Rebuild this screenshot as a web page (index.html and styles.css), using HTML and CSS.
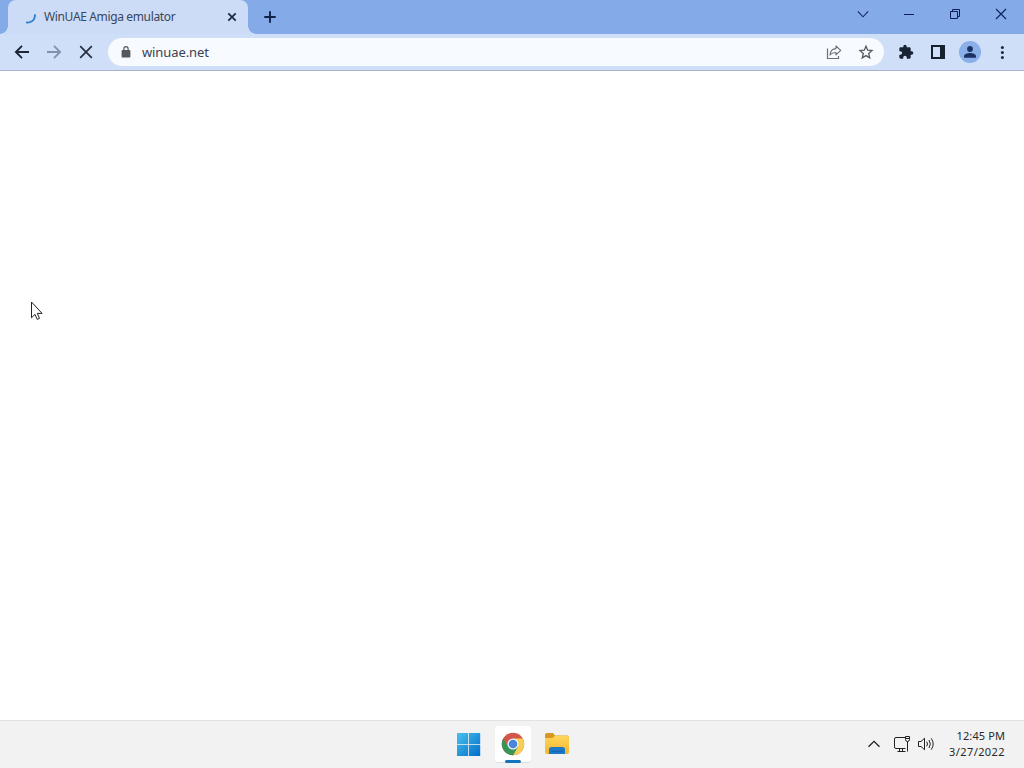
FILE: index.html
```html
<!DOCTYPE html>
<html lang="en">
<head>
    <meta charset="UTF-8">
    <title>WinUAE Amiga emulator</title>
    <link rel="stylesheet" href="styles.css">
</head>
<body>
    <div class="tab-strip">
        <div class="tab">
            <svg class="spinner" width="16" height="16" viewBox="0 0 16 16"><path d="M13 5.300C13.200 10.600 9.800 14.300 4 13.400" fill="none" stroke="#2c7ed3" stroke-width="1.8"/></svg>
            <span class="tab-title">WinUAE Amiga emulator</span>
            <svg class="tab-close" width="16" height="16" viewBox="0 0 16 16"><path d="M4.300 4.300l7.400 7.400M11.700 4.300l-7.400 7.400" stroke="#1c2740" stroke-width="1.7"/></svg>
        </div>
        <div class="new-tab">
            <svg width="16" height="16" viewBox="0 0 16 16"><path d="M8 2.300v11.400M2.300 8h11.400" stroke="#10234a" stroke-width="1.9"/></svg>
        </div>
        <div class="window-buttons">
            <div class="window-button"><svg width="12" height="12" viewBox="0 0 12 12"><path d="M.8 3.300L6 8.800l5.200-5.500" fill="none" stroke="#16266b" stroke-width="1.1"/></svg></div>
            <div class="window-button"><svg width="12" height="12" viewBox="0 0 12 12"><path d="M1 6.500h10" stroke="#0d1d5c"/></svg></div>
            <div class="window-button"><svg width="12" height="12" viewBox="0 0 12 12"><path d="M1.500 3.500h7v7h-7zM3.500 3.500v-2h7v7h-2" fill="none" stroke="#0d1d5c"/></svg></div>
            <div class="window-button"><svg width="12" height="12" viewBox="0 0 12 12"><path d="M1 1l10 10M11 1L1 11" stroke="#0d1d5c" stroke-width="1.1"/></svg></div>
        </div>
    </div>

    <div class="toolbar">
        <div class="tool"><svg width="18" height="18" viewBox="0 0 18 18"><path d="M16 9H3M9 2.900L2.900 9l6.100 6.100" fill="none" stroke="#1c2638" stroke-width="1.9"/></svg></div>
        <div class="tool"><svg width="18" height="18" viewBox="0 0 18 18"><path d="M2 9h13M9 2.900L15.100 9l-6.100 6.100" fill="none" stroke="#8290ad" stroke-width="1.8"/></svg></div>
        <div class="tool"><svg width="18" height="18" viewBox="0 0 18 18"><path d="M3.200 3.200l11.600 11.600M14.800 3.200L3.200 14.800" stroke="#252e3f" stroke-width="1.7"/></svg></div>
        <div class="omnibox">
            <svg class="lock" width="12" height="14" viewBox="0 0 12 14"><path d="M2.600 5h6.800q1 0 1 1v5.500q0 1-1 1H2.600q-1 0-1-1V6q0-1 1-1z" fill="#55585d"/><path d="M3.900 5.500V3.700a2.100 2.100 0 0 1 4.200 0v1.800" fill="none" stroke="#55585d" stroke-width="1.200"/></svg>
            <span class="url">winuae.net</span>
            <div class="tool"><svg width="18" height="18" viewBox="0 0 18 18"><path d="M2.500 5.500v10h11V13" fill="none" stroke="#6b6f78" stroke-width="1.200"/><path d="M5 12c.3-4 2.500-6.200 6-6.400V3l4.700 4.400-4.700 4.400V9.500C8.200 9.400 6.400 10.400 5 12z" fill="none" stroke="#6b6f78" stroke-width="1.100" stroke-linejoin="round"/></svg></div>
            <div class="tool"><svg width="18" height="18" viewBox="0 0 18 18"><path d="M9 3.200l1.700 4 4.300.4-3.300 2.900 1 4.300L9 12.600l-3.700 2.200 1-4.300L3 7.600l4.300-.4z" fill="none" stroke="#555961" stroke-width="1.300"/></svg></div>
        </div>
        <div class="tool"><svg width="16" height="16" viewBox="0 0 24 24"><path fill="#182334" d="M20.500 11H19V7c0-1.100-.9-2-2-2h-4V3.500a2.500 2.500 0 0 0-5 0V5H4c-1.100 0-2 .9-2 2v3.800h1.500a2.700 2.700 0 0 1 0 5.400H2V20c0 1.100.9 2 2 2h3.800v-1.500a2.700 2.700 0 0 1 5.400 0V22H17c1.100 0 2-.9 2-2v-4h1.500a2.500 2.500 0 0 0 0-5z"/></svg></div>
        <div class="tool"><svg width="16" height="16" viewBox="0 0 16 16"><path d="M2 2h12v12H2z" fill="none" stroke="#16212d" stroke-width="2"/><path d="M10 2h4v12h-4z" fill="#16212d"/></svg></div>
        <div class="tool"><div class="avatar"><svg width="14" height="14" viewBox="0 0 14 14"><circle cx="7" cy="4" r="2.900" fill="#1c3160"/><path d="M1 12.800v-1.500C1 9 4.500 8 7 8s6 1 6 3.300v1.500z" fill="#1c3160"/></svg></div></div>
        <div class="tool"><svg width="4" height="16" viewBox="0 0 4 16"><circle cx="2.400" cy="3.500" r="1.500" fill="#1d2738"/><circle cx="2.400" cy="8.500" r="1.500" fill="#1d2738"/><circle cx="2.400" cy="13.500" r="1.500" fill="#1d2738"/></svg></div>
    </div>

    <div class="page">
        <svg class="cursor" width="13" height="20" viewBox="0 0 13 20"><path d="M.5 1v15.800l3.500-3.400 2.200 5 2.300-1-2.200-5h4.800z" fill="#fff" stroke="#222"/></svg>
    </div>

    <div class="taskbar">
        <div class="apps">
            <div class="app">
                <svg width="24" height="24" viewBox="0 0 24 24">
                    <defs><linearGradient id="win" x1="0" y1="0" x2="24" y2="24" gradientUnits="userSpaceOnUse"><stop offset="0" stop-color="#4cc3ee"/><stop offset="1" stop-color="#006cc9"/></linearGradient></defs>
                    <path d="M0 1h11.200v11.200H0zM12 1h11.200v11.200H12zM0 13h11.200v11H0zM12 13h11.200v11H12z" fill="url(#win)"/>
                </svg>
            </div>
            <div class="app active">
                <svg width="24" height="24" viewBox="0 0 24 24">
                    <circle cx="12" cy="12" r="11.200" fill="#d1574d"/>
                    <path d="M12 6.400h9.700A11.200 11.200 0 0 1 12 23.200l4.850-8.400z" fill="#f6cf55"/>
                    <path d="M7.150 14.800L2.300 6.400A11.200 11.200 0 0 0 12 23.200l4.850-8.400z" fill="#36965a"/>
                    <circle cx="12" cy="12" r="5.600" fill="#eef3fa"/>
                    <circle cx="12" cy="12" r="4.300" fill="#4b85dc"/>
                </svg>
                <span class="indicator"></span>
            </div>
            <div class="app">
                <svg width="26" height="24" viewBox="0 0 26 24">
                    <defs><linearGradient id="folder" x1="0" y1="0" x2="0" y2="1"><stop offset="0" stop-color="#ffd65c"/><stop offset="1" stop-color="#f0b62e"/></linearGradient></defs>
                    <path d="M1 3q0-2 2-2h6l2 2.500h12q2 0 2 2V12H1z" fill="#d6981f"/>
                    <path d="M1 6h7.500L11 3.700h12q2 0 2 2V20q0 2-2 2H3q-2 0-2-2z" fill="url(#folder)"/>
                    <path d="M5 22v-4.500Q5 15 7.500 15h11q2.500 0 2.500 2.500V22z" fill="#1c78c6"/>
                    <path d="M7.500 19.500h11" stroke="#1465b0"/>
                </svg>
            </div>
        </div>
        <div class="tray">
            <svg class="chevron" width="14" height="14" viewBox="0 0 14 14"><path d="M1.500 9.700L7 4.300l5.500 5.400" fill="none" stroke="#222" stroke-width="1.300"/></svg>
            <svg class="network" width="18" height="18" viewBox="0 0 18 18"><path d="M12 2.500H3Q1.500 2.500 1.500 4v8q0 1.500 1.500 1.500h9.500M6.500 13.500v3M9.500 13.500v3M4.500 16.500h8M12.500 1.500h4v3q0 2-2 2t-2-2zM12.500 3.500h4M14.500 6.500v10" fill="none" stroke="#222"/></svg>
            <svg class="volume" width="18" height="18" viewBox="0 0 18 18"><path d="M1.500 6.500H4l3.500-3.200v11.400L4 11.500H1.500z" fill="none" stroke="#222" stroke-linejoin="round"/><path d="M9.700 6.700q1.600 2.300 0 4.600M12 5q2.700 4 0 8M14.200 3.300q4 5.700 0 11.400" fill="none" stroke="#222"/></svg>
            <div class="clock">
                <div class="time">12:45 PM</div>
                <div class="date">3/27/2022</div>
            </div>
        </div>
    </div>
</body>
</html>
```
FILE: styles.css
```css
* {
    box-sizing: border-box;
}
body {
    margin: 0;
    width: 1024px;
    height: 768px;
    overflow: hidden;
    display: flex;
    flex-direction: column;
    background: #fff;
    font-family: "Noto Sans", "Open Sans", sans-serif;
    font-size: 12px;
}
svg {
    display: block;
    flex-shrink: 0;
}
.tab-strip {
    height: 34px;
    display: flex;
    padding-left: 8px;
    background: #84abe8;
}
.tab {
    position: relative;
    width: 240px;
    display: flex;
    align-items: center;
    padding: 0 8px 0 14px;
    border-radius: 8px 8px 0 0;
    background: #ccdcf6;
}
/* outward curves at the foot of the tab */
.tab::before,
.tab::after {
    content: "";
    position: absolute;
    bottom: 0;
    width: 8px;
    height: 8px;
}
.tab::before {
    left: -8px;
    background: radial-gradient(circle at 0 0, transparent 7.5px, #ccdcf6 8px);
}
.tab::after {
    right: -8px;
    background: radial-gradient(circle at 100% 0, transparent 7.5px, #ccdcf6 8px);
}
.tab-title {
    margin-left: 6px;
    padding-bottom: 1px;
    flex: 1;
    color: #3a465d;
    white-space: nowrap;
    letter-spacing: -0.36px;
}
.new-tab {
    width: 28px;
    margin-left: 8px;
    display: flex;
    align-items: center;
    justify-content: center;
}
.window-buttons {
    margin-left: auto;
    height: 28px;
    display: flex;
}
.window-button {
    width: 46px;
    display: flex;
    align-items: center;
    justify-content: center;
}
.toolbar {
    height: 37px;
    display: flex;
    align-items: center;
    padding: 0 6px;
    border-bottom: 1px solid #a9b4cc;
    background: #d0dff8;
}
.tool {
    width: 32px;
    height: 32px;
    display: flex;
    align-items: center;
    justify-content: center;
}
.omnibox {
    flex: 1;
    height: 28px;
    margin: 0 6px;
    padding: 0 2px 0 12px;
    display: flex;
    align-items: center;
    border-radius: 14px;
    background: #f7fafe;
}
.url {
    margin-left: 10px;
    flex: 1;
    font-size: 13px;
    letter-spacing: -0.1px;
    color: #39414f;
}
.avatar {
    width: 22px;
    height: 22px;
    display: flex;
    align-items: center;
    justify-content: center;
    border-radius: 50%;
    background: #8aafe9;
}
.page {
    position: relative;
    flex: 1;
    background: #fff;
}
.cursor {
    position: absolute;
    left: 31px;
    top: 230px;
}
.taskbar {
    height: 48px;
    display: grid;
    grid-template-columns: 1fr auto 1fr;
    padding-bottom: 1px;
    border-top: 1px solid #e2e2e4;
    background: #f2f2f2;
}
.apps {
    grid-column: 2;
    display: flex;
    align-items: center;
    gap: 8px;
    padding-left: 2px;
}
.app {
    position: relative;
    width: 36px;
    height: 36px;
    display: flex;
    align-items: center;
    justify-content: center;
}
.app.active {
    border-radius: 3px;
    background: #fff;
    box-shadow: 0 1px 0 #dedede;
}
.indicator {
    position: absolute;
    left: 10px;
    bottom: -1px;
    width: 16px;
    height: 3px;
    border-radius: 2px;
    background: #1373bd;
}
.tray {
    display: flex;
    align-items: center;
    justify-content: flex-end;
    padding-right: 19px;
}
.network {
    margin-left: 12px;
}
.volume {
    margin-left: 6px;
}
.clock {
    margin-left: 14px;
    text-align: right;
    font-size: 11px;
    line-height: 16px;
    color: #292929;
}
.time {
    letter-spacing: 0.1px;
}
.date {
    letter-spacing: 0.42px;
}
```
